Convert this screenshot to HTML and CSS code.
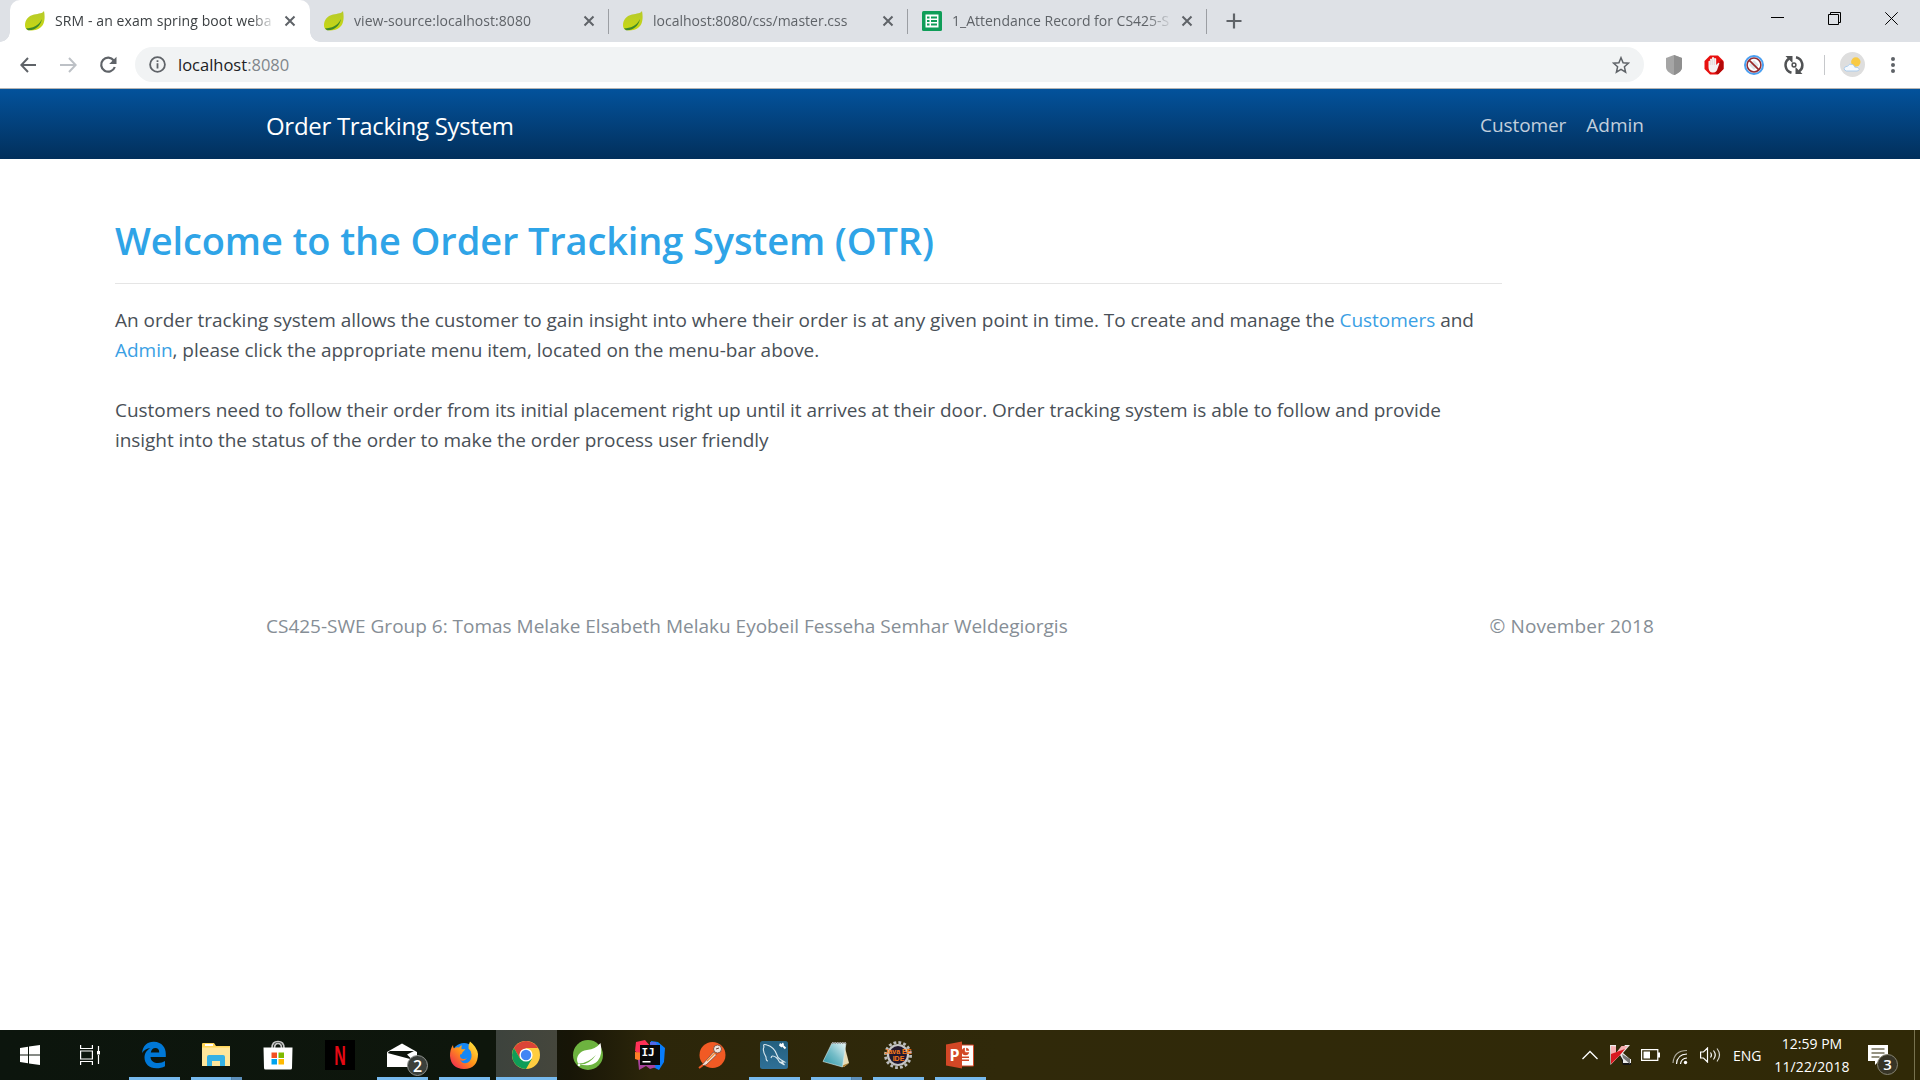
FILE: index.html
```html
<!DOCTYPE html>
<html lang="en">
<head>
<meta charset="utf-8">
<title>SRM - an exam spring boot webapp</title>
<link rel="stylesheet" href="styles.css">
</head>
<body>
<svg class="defs" width="0" height="0">
  <defs>
    <linearGradient id="leafg" x1="0" y1="0" x2="0" y2="1"><stop offset="0" stop-color="#b5c92c"/><stop offset="1" stop-color="#c9d910"/></linearGradient>
    <symbol id="leaf" viewBox="0 0 20 20">
      <path d="M19 0C17.500 2.500 14 2.500 9 3.500C3 5 0 9 0 14C0 16.500 .8 18 2.500 19C9 20.500 16 18.500 18.500 12.500C20 8.500 19.800 3.500 19 0Z" fill="url(#leafg)"/>
      <path d="M1 17.300C7.500 17.300 13.500 15 17 8C15.500 15.800 9 20 3 19.200Z" fill="#3f8a28"/>
    </symbol>
    <symbol id="cross" viewBox="0 0 12 12"><path d="M1.500 1.500L10.500 10.500M10.500 1.500L1.500 10.500" stroke="#5f6368" stroke-width="2" fill="none"/></symbol>
  </defs>
</svg>
<div class="tabstrip">
  <div class="tab active">
    <svg class="fav" width="20" height="20"><use href="#leaf"/></svg>
    <span class="tab-title t1">SRM - an exam spring boot weba</span>
    <svg class="tab-x" width="12" height="12"><use href="#cross"/></svg>
  </div>
  <div class="tab sep">
    <svg class="fav" width="20" height="20"><use href="#leaf"/></svg>
    <span class="tab-title t2">view-source:localhost:8080</span>
    <svg class="tab-x" width="12" height="12"><use href="#cross"/></svg>
  </div>
  <div class="tab sep">
    <svg class="fav" width="20" height="20"><use href="#leaf"/></svg>
    <span class="tab-title t3">localhost:8080/css/master.css</span>
    <svg class="tab-x" width="12" height="12"><use href="#cross"/></svg>
  </div>
  <div class="tab sep">
    <svg class="fav" width="20" height="20" viewBox="0 0 20 20"><rect width="20" height="20" rx="1.500" fill="#0f9d58"/><path d="M3.500 3.500h13v13h-13z" fill="#fff"/><path d="M5 5.500h2.500v2H5zM9 5.500h6v2H9zM5 9h2.500v2H5zM9 9h6v2H9zM5 12.500h2.500v2H5zM9 12.500h6v2H9z" fill="#0f9d58"/></svg>
    <span class="tab-title t4">1_Attendance Record for CS425-S</span>
    <svg class="tab-x" width="12" height="12"><use href="#cross"/></svg>
  </div>
  <svg class="newtab" width="16" height="16" viewBox="0 0 16 16"><path d="M8 .5v15M.5 8h15" stroke="#5f6368" stroke-width="2.200"/></svg>
  <div class="winctl">
    <svg width="13" height="13" viewBox="0 0 13 13"><path d="M0 5.500h13" stroke="#000"/></svg>
    <svg width="13" height="13" viewBox="0 0 13 13" fill="none" stroke="#000"><path d="M.5 2.500h10v10h-10zM2.500 2.500v-2h10v10h-2"/></svg>
    <svg width="13" height="13" viewBox="0 0 13 13"><path d="M.3.3l12.400 12.400M12.700.3L.3 12.700" stroke="#000"/></svg>
  </div>
</div>

<div class="toolbar">
  <svg class="nav-ic" width="17" height="16" viewBox="0 0 17 16" fill="none" stroke="#5f6368" stroke-width="2"><path d="M16 8H1.500M8 1L1.300 8L8 15"/></svg>
  <svg class="nav-ic" width="17" height="16" viewBox="0 0 17 16" fill="none" stroke="#bdc1c6" stroke-width="2"><path d="M0 8h15M9 1l6.700 7L9 15"/></svg>
  <svg class="nav-ic reload" width="18" height="18" viewBox="0 0 18 18"><path d="M14.800 4.500A7 7 0 1 0 15.800 11" fill="none" stroke="#5f6368" stroke-width="2.200"/><path d="M17.500.7V8h-7.300z" fill="#5f6368"/></svg>
  <div class="omnibox">
    <svg width="17" height="17" viewBox="0 0 17 17"><circle cx="8.500" cy="8.500" r="7.400" fill="none" stroke="#5f6368" stroke-width="1.800"/><path d="M7.600 4.200h1.800V6H7.600zM7.600 7.300h1.800v5.300H7.600z" fill="#5f6368"/></svg>
    <span class="url"><b>localhost</b>:8080</span>
    <svg class="star" width="18" height="18" viewBox="0 0 18 18"><path d="M9 1.700l2.100 5 5.300.500-4 3.600 1.200 5.300L9 13.300l-4.600 2.800 1.200-5.300-4-3.600 5.300-.5z" fill="none" stroke="#5f6368" stroke-width="1.500"/></svg>
  </div>
  <div class="exts">
    <svg width="20" height="20" viewBox="0 0 20 20"><path d="M10 0l8 3v9c0 4-4 6.500-8 8c-4-1.500-8-4-8-8V3z" fill="#a5a5a5"/><path d="M10 0l8 3v9c0 4-4 6.500-8 8z" fill="#8f8f8f"/></svg>
    <svg width="20" height="20" viewBox="0 0 20 20"><path d="M6 .5h8l5.500 5.500v8L14 19.500H6L.5 14V6z" fill="#e8100f"/><path d="M13 19l-3-3 7-11 2.500 2v7l-5 5z" fill="#b30808"/><path d="M4.500 10V6.300q.8-1 1.600 0V4q.9-1.200 1.900 0V2.500q1-1.200 2.100 0V3.600q1-1 2.100.1V10l1.900-2q1.300-.6 1.300.6l-1.800 4.800q-1 4-4.200 4H8Q4.500 17 4.500 12z" fill="#f5f1f1"/><path d="M6.200 5v5M8.200 4v6M10.300 4v6" stroke="#cbbcbc" stroke-width=".5"/></svg>
    <svg width="20" height="20" viewBox="0 0 20 20"><circle cx="10" cy="10" r="9" fill="#fff" stroke="#4ba0f1" stroke-width="2"/><circle cx="10" cy="10" r="6.900" fill="#fff" stroke="#8f2c35" stroke-width="1.500"/><path d="M10 5l5 5-5 5-5-5z" fill="#dfe4e8"/><path d="M5.300 5.300l9.400 9.400" stroke="#9b2828" stroke-width="1.700"/></svg>
    <svg width="20" height="20" viewBox="0 0 20 20" fill="none" stroke="#505254" stroke-width="2.500"><path d="M5 3.500A8 8 0 0 0 7.500 17.800M15 16.500A8 8 0 0 0 12 2.200"/><circle cx="10" cy="10" r="1.900" stroke-width="1.500"/><path d="M1.500 1h7v7zM18.500 19h-7v-7z" fill="#505254" stroke="none"/></svg>
    <i class="ext-sep"></i>
    <svg class="avatar" width="25" height="25" viewBox="0 0 25 25"><circle cx="12.500" cy="12.500" r="12.500" fill="#dedede"/><circle cx="15.800" cy="10" r="4.700" fill="#f8ca45"/><path d="M6.500 19q-2.500-.5-2.300-2.600Q5 14 7.500 14.300Q9 11.200 12.300 12.400Q14.500 13 14.800 15.200Q19 15 19.300 17.200Q19 19 17 19z" fill="#f5f9fe" stroke="#a5c9ed" stroke-width=".9"/></svg>
    <svg class="dots" width="6" height="18" viewBox="0 0 6 18" fill="#5f6368"><circle cx="3" cy="3" r="2"/><circle cx="3" cy="9" r="2"/><circle cx="3" cy="15" r="2"/></svg>
  </div>
</div>

<nav class="navbar">
  <a class="brand">Order Tracking System</a>
  <a class="nav-link l1">Customer</a>
  <a class="nav-link l2">Admin</a>
</nav>

<main class="content">
  <h1>Welcome to the Order Tracking System (OTR)</h1>
  <p><span class="ln p1">An order tracking system allows the customer to gain insight into where their order is at any given point in time. To create and manage the <a>Customers</a> and</span>
  <span class="ln p2"><a>Admin</a>, please click the appropriate menu item, located on the menu-bar above.</span></p>
  <p><span class="ln p3">Customers need to follow their order from its initial placement right up until it arrives at their door. Order tracking system is able to follow and provide</span>
  <span class="ln p4">insight into the status of the order to make the order process user friendly</span></p>
</main>

<footer class="footer">
  <span class="f1">CS425-SWE Group 6: Tomas Melake Elsabeth Melaku Eyobeil Fesseha Semhar Weldegiorgis</span>
  <span class="f2">© November 2018</span>
</footer>

<div class="taskbar">
  <div class="sys"><svg width="20" height="20" viewBox="0 0 20 20" fill="#fff"><path d="M0 3l8-1.200v7.700H0zM9 1.600L20 0v9.500H9zM0 10.500h8v7.700L0 17zM9 10.500h11V20L9 18.400z"/></svg></div>
  <div class="sys view"><svg width="21" height="20" viewBox="0 0 21 20" fill="none" stroke="#fff" stroke-width="1.200"><path d="M.6 0v3.500h11.800V0M.6 20v-3.500h11.800V20M.6 6h11.800v8H.6zM18.500 1v5M18.500 10v9"/><path d="M17 6h3v3.500h-3z" fill="#fff" stroke="none"/></svg></div>
  <div class="app run"><svg width="26" height="28" viewBox="0 0 26 28"><path d="M1 12C2 4 7 .5 13 .8C21 1 25 7 24.800 13v3H9.500C9.800 20 13 22 17 22c3 0 5-.8 7-2v5.300c-2.500 1.500-5.500 2-8.500 2C8 27.300 3.500 22.500 3.500 16.500C3.500 12 6 9 9.500 7C6 7.500 3 9 1 12zM9.800 11.500h8.400C18.300 8.500 17 7 14.400 7c-2.600 0-4.200 2-4.600 4.500z" fill="#0078d7"/></svg></div>
  <div class="app run multi"><svg width="28" height="26" viewBox="0 0 28 26"><path d="M0 2Q0 1 1 1h11l2 3h14v20H0z" fill="#ffd557"/><path d="M0 5.500h28V24H0z" fill="#ffe69b"/><path d="M3 2h8v2H3z" fill="#fff"/><path d="M5 24V15q0-2 2-2h14q2 0 2 2v9h-5v-5h-8v5z" fill="#35b1e4"/></svg></div>
  <div class="app"><svg width="30" height="30" viewBox="0 0 30 30"><path d="M9 8q0-6.500 6-6.500T21 8M11.500 8q0-4.500 3.500-4.500T18.500 8" fill="none" stroke="#c8c8c8" stroke-width="1.700"/><path d="M.5 7.500h29l-.5 20.500q0 1.500-1.500 1.500h-25Q1 29.500 1 28z" fill="#fff"/><path d="M8.500 12.500H14V18H8.500z" fill="#f25022"/><path d="M15.500 12.500H21V18h-5.500z" fill="#7fba00"/><path d="M8.500 19H14v5.500H8.500z" fill="#00a4ef"/><path d="M15.500 19H21v5.500h-5.500z" fill="#ffb900"/></svg></div>
  <div class="app"><svg width="30" height="30" viewBox="0 0 30 30"><path d="M0 0h30v30H0z"/><text transform="translate(15 25) scale(.56 1)" text-anchor="middle" font-family="Liberation Sans" font-weight="bold" font-size="28.500" fill="#e50914">N</text></svg></div>
  <div class="app run"><svg class="mail" width="42" height="34" viewBox="0 0 42 34"><path d="M1 10L16 1.500 31 10v15H1z" fill="#fff"/><path d="M4 9h24l-7 3.500 5 5L1.500 11z" fill="#0d140c"/><path d="M2 10l19 2.500" stroke="#fff" stroke-width="0"/><circle cx="31.500" cy="23.500" r="10" fill="#3b403b" stroke="#919491"/><text x="31.500" y="29.500" text-anchor="middle" font-family="Open Sans" font-size="16" font-weight="600" fill="#fff">2</text></svg></div>
  <div class="app run"><svg width="28" height="28" viewBox="0 0 28 28"><defs><linearGradient id="ff" x1="1" y1="0" x2="0" y2="1"><stop offset="0" stop-color="#fff044"/><stop offset=".5" stop-color="#ff9318"/><stop offset="1" stop-color="#ef155d"/></linearGradient></defs><circle cx="14" cy="14" r="12" fill="#1687f5"/><path d="M3 4q0 2 1 3.500Q7 5.500 9 6.500q1-2 3-2.300-1 2-.5 4h4l-3 3q0 2-2.500 2.500Q9.500 17 13 18q2.500.5 4.500-1.500-3.500 5-7.500 2.300Q13 24 18 21.500q4-2.500 3.500-8-.2-4-3-6 0-4.500 1.500-7Q27 6 28 13q0 14.500-14 15Q1 27.500 0 15 0 8 3 4z" fill="url(#ff)"/></svg></div>
  <div class="app run current"><svg width="28" height="28" viewBox="0 0 28 28"><circle cx="14" cy="14" r="14" fill="#ffcd40"/><path d="M1.900 7A14 14 0 0 1 26.100 7H14L8 17.500z" fill="#db4437"/><path d="M1.900 7A14 14 0 0 0 14 28l6-10.500L14 20 8 17.500z" fill="#0f9d58"/><circle cx="14" cy="14" r="6.600" fill="#fff"/><circle cx="14" cy="14" r="5.200" fill="#4285f4"/></svg></div>
  <div class="app"><svg width="30" height="30" viewBox="0 0 30 30"><circle cx="15" cy="15" r="15" fill="#6db33f"/><path d="M27.500 3Q30 14 25 20.500C20.500 26 13 26 6.500 24.500Q16 25 23 15Q14 24 5 23.500C2 17 6.500 11 14 10Q23 9 27.500 3z" fill="#fff"/><circle cx="6" cy="25" r="1.300" fill="#fff"/></svg></div>
  <div class="app"><svg width="30" height="30" viewBox="0 0 30 30"><path d="M1 2l9-2 6 7-6 12L0 11z" fill="#ff3157"/><path d="M0 12l9 1v9l-9-3z" fill="#ff7e27"/><path d="M16 1l7 1 7 6-1 14-5 8-10-5z" fill="#087cfa"/><path d="M3 20l10-3 8 10-6 2-4-3-7 4z" fill="#a8429b"/><path d="M15 2l6 0 3 10-9-4z" fill="#5268e8"/><path d="M5 5h20v20H5z" fill="#080808"/><text x="6.500" y="16" font-family="DejaVu Sans Mono" font-weight="bold" font-size="11" fill="#fff">IJ</text><path d="M7.500 21h8v1.500h-8z" fill="#fff"/></svg></div>
  <div class="app"><svg width="28" height="28" viewBox="0 0 28 28"><circle cx="14.500" cy="14" r="13" fill="#f15a24"/><path d="M3 25L15.500 11l3 3L8 24z" fill="#f5ded2" stroke="#6d4030" stroke-width=".7"/><circle cx="19.500" cy="8" r="4" fill="#eee3dd" stroke="#6d4030" stroke-width=".8"/><path d="M9 20L17 12" stroke="#f58a35" stroke-width="1.500"/><path d="M1 27l4-3" stroke="#f15a24" stroke-width="2"/><path d="M18 8l3-1" stroke="#6d4030"/></svg></div>
  <div class="app run"><svg width="28" height="28" viewBox="0 0 28 28"><defs><linearGradient id="my" x1="0" y1="0" x2="0" y2="1"><stop offset="0" stop-color="#24607f"/><stop offset="1" stop-color="#2f7097"/></linearGradient></defs><rect width="28" height="28" rx="2.500" fill="url(#my)"/><path d="M8 20Q6 20 6 16Q2 9 4 6Q2.500 2.500 7 4Q14 6 16.500 13q1 4 4 5.500l4 2.500-3 0 3 3-5-3q-3-6-7-6-1 0-1.500 2" fill="none" stroke="#dbe9ef" stroke-width="1.100"/><path d="M21.500 3.500l4 4" stroke="#fff" stroke-width="2"/><path d="M19 4.500l1-2.500 1.500 1L23 1.500l1 2-2.500 3z" fill="#fff"/></svg></div>
  <div class="app run multi"><svg width="28" height="28" viewBox="0 0 28 28"><defs><linearGradient id="np" x1="1" y1="0" x2="0" y2="1"><stop offset="0" stop-color="#e9f6f7"/><stop offset=".5" stop-color="#75bdc8"/><stop offset="1" stop-color="#2793a4"/></linearGradient></defs><path d="M22 3l5 19-5 4-3-1z" fill="#e7dcb7"/><path d="M27 22l-5 4-3-1 8-3z" fill="#a97929"/><path d="M10 2h14l-3.500 24L1 20.500z" fill="url(#np)" stroke="#dceced" stroke-width=".6"/><path d="M10 2h15" stroke="#9a9a9a" stroke-width="2" stroke-dasharray="1.500 1"/></svg></div>
  <div class="app run"><svg width="30" height="30" viewBox="0 0 30 30"><circle cx="15" cy="15" r="12.600" fill="none" stroke="#bcbdbd" stroke-width="2.800" stroke-dasharray="2.800 2.150"/><circle cx="15" cy="15" r="10" fill="#21182f" stroke="#c5c5c5" stroke-width="2.200"/><g font-family="Liberation Sans" font-weight="bold" font-size="7" fill="#fc7d18" text-anchor="middle"><text x="15" y="14">Java EE</text><text x="15.500" y="20.500">IDE</text></g></svg></div>
  <div class="app run"><svg width="28" height="28" viewBox="0 0 28 28"><path d="M15 4h12.500v21H15z" fill="#fff" stroke="#d24726"/><path d="M16 15.500h7v1.500h-7zM16 18.500h7V20h-7z" fill="#d24726"/><circle cx="19.500" cy="10.500" r="3.700" fill="#d24726"/><path d="M19.500 10.500V6M19.500 10.500H24" stroke="#fff" stroke-width="1.300"/><path d="M0 3.500L16 .5v27L0 24.500z" fill="#d24726"/><text x="3.500" y="20" font-family="Open Sans" font-weight="bold" font-size="16" fill="#fff">P</text></svg></div>

  <div class="tray">
    <svg width="16" height="10" viewBox="0 0 16 10"><path d="M.5 9L8 1.500 15.500 9" fill="none" stroke="#fff" stroke-width="1.300"/></svg>
    <svg class="kas" width="21" height="21" viewBox="0 0 21 21"><path d="M10 10l11 6v4h-8z" fill="#151515"/><path d="M6 12L15 0h5l-7 8 7 6h1v4h-8v-3l-3-5L.5 20 0 0h6z" fill="#ececec"/><path d="M1 1l5 .5V8l5.500-7H18l-8 8.500L1 19z" fill="#f8b0b3"/><path d="M1 9l14-5-5 6-9 9z" fill="#d91820"/><path d="M12 9l8 5v5l-7-6z" fill="#777"/></svg>
    <svg class="bat" width="19" height="12" viewBox="0 0 19 12"><path d="M.6.600h16.200v10.800H.6z" fill="none" stroke="#fff" stroke-width="1.200"/><path d="M2.500 2.500H9v7H2.500zM17 3.500h2v5h-2z" fill="#fff"/></svg>
    <svg class="wifi" width="16" height="16" viewBox="0 0 16 16" fill="none" stroke="#fff" stroke-width="1.200"><path d="M1 14Q2 1.500 15 1.500" opacity=".6"/><path d="M4.500 15Q5 5.500 15 5M8.500 15Q9 9.500 15 9"/><circle cx="13.500" cy="13.500" r="1.700" fill="#fff" stroke="none"/></svg>
    <svg class="snd" width="21" height="16" viewBox="0 0 21 16" fill="none" stroke="#fff" stroke-width="1.200"><path d="M.6 5H3.500l4-4v14l-4-4H.600zM10.500 5.500q1.800 2.500 0 5M13.500 3.500q3.500 4.500 0 9"/><path d="M17 1.500q5 6.500 0 13" opacity=".8"/></svg>
    <span class="lang">ENG</span>
    <div class="clock"><span class="tm">12:59 PM</span><span class="dt">11/22/2018</span></div>
    <svg class="note" width="32" height="31" viewBox="0 0 32 31"><path d="M1 1h20v16H12l-4 4v-4H1z" fill="#fff"/><path d="M4.500 5h13M4.500 9h13M4.500 13h8" stroke="#2d2707" stroke-width="1.200"/><circle cx="20.500" cy="20.500" r="10" fill="#373426" stroke="#858373"/><text x="20.500" y="26" text-anchor="middle" font-family="Open Sans" font-size="15" font-weight="600" fill="#fff">3</text></svg>
  </div>
</div>
</body>
</html>
```
FILE: styles.css
```css
* { box-sizing: border-box; }
body {
  margin: 0;
  height: 1080px;
  display: flex;
  flex-direction: column;
  overflow: hidden;
  background: #fff;
  font-family: "Open Sans", "Noto Sans", sans-serif;
  color: #495057;
}
svg { display: block; flex: none; }
.defs { position: absolute; }

/* Browser tab strip */
.tabstrip {
  height: 42px;
  flex: none;
  display: flex;
  align-items: flex-start;
  background: #dee1e6;
  padding-left: 10px;
}
.tab {
  width: 299px;
  height: 42px;
  flex: none;
  display: flex;
  align-items: center;
  padding: 0 15px 0 14px;
}
.tab.active {
  width: 300px;
  padding-left: 15px;
  background: #fff;
  border-radius: 10px 10px 0 0;
  position: relative;
}
.tab.active::before, .tab.active::after {
  content: "";
  position: absolute;
  bottom: 0;
  width: 10px;
  height: 10px;
}
.tab.active::before { left: -10px; background: radial-gradient(circle at 0 0, transparent 9.500px, #fff 10px); }
.tab.active::after { right: -10px; background: radial-gradient(circle at 100% 0, transparent 9.500px, #fff 10px); }
.tab.sep { background: linear-gradient(#9b9ea3, #9b9ea3) 298px 9px / 1px 25px no-repeat; }
.tab-title {
  margin-left: 10px;
  width: 220px;
  height: 20px;
  flex: none;
  font-size: 14px;
  line-height: 20px;
  white-space: nowrap;
  color: #5f6368;
  -webkit-mask-image: linear-gradient(90deg, #000 195px, transparent 221px);
}
.active .tab-title { color: #3c4043; }
.t1 { letter-spacing: 0.1px; }
.t2 { letter-spacing: 0.05px; }
.tab-x { margin-left: 9px; }
.newtab { margin: 13px 0 0 19px; }
.winctl { margin-left: auto; display: flex; gap: 44px; padding: 12px 22px 0 0; }

/* Browser toolbar */
.toolbar {
  height: 47px;
  flex: none;
  display: flex;
  align-items: center;
  padding: 0 24px 1px 20px;
  border-bottom: 1px solid #b3b3b3;
}
.nav-ic { margin-right: 23px; }
.reload { margin-left: -1px; margin-right: 18px; }
.omnibox {
  width: 1509px;
  height: 35px;
  border-radius: 18px;
  background: #f1f3f4;
  display: flex;
  align-items: center;
  padding: 0 14px 0 14px;
}
.url { margin-left: 12px; font-size: 16.500px; color: #80868b; }
.url b { font-weight: 400; color: #202124; }
.star { margin-left: auto; }
.exts { display: flex; align-items: center; gap: 20px; margin-left: 20px; }
.ext-sep { width: 1px; height: 20px; background: #c6c8cb; }
.avatar { margin-left: -5px; }
.dots { margin-left: 5px; }

/* Site header */
.navbar {
  height: 70px;
  flex: none;
  display: flex;
  align-items: center;
  padding: 0 276px 0 266px;
  background: linear-gradient(#03529c, #022f5b);
}
.navbar a { white-space: nowrap; }
.brand { font-size: 24px; letter-spacing: -0.3px; color: #fff; margin-right: auto; line-height: 30px; padding-top: 4px; }
.nav-link { font-size: 19px; color: #c2cfdc; line-height: 26px; padding-top: 1px; margin-left: 20px; }
.l1 { letter-spacing: -0.08px; }

/* Page content */
.content { width: 1387px; height: 440px; padding-top: 51px; margin-left: 115px; flex: none; }
h1 {
  margin: 0 0 21px;
  height: 74px;
  padding: 6px 0 0;
  border-bottom: 1px solid #e5e5e5;
  font-size: 38px;
  line-height: 48px;
  font-weight: 600;
  letter-spacing: -0.13px;
  color: #2fa4e7;
  white-space: nowrap;
}
p { margin: 0 0 30px; font-size: 19px; line-height: 30px; }
p a { color: #3aa0e4; }
.ln { display: block; white-space: nowrap; letter-spacing: -0.025px; }
.p4 { letter-spacing: -0.05px; }
.footer {
  height: 54px;
  flex: none;
  display: flex;
  justify-content: space-between;
  align-items: center;
  padding: 0 266px;
  font-size: 19px;
  color: #868e96;
  white-space: nowrap;
}
.f2 { letter-spacing: 0.12px; }

/* Windows taskbar */
.taskbar {
  margin-top: auto;
  height: 50px;
  flex: none;
  display: flex;
  color: #fff;
  background: linear-gradient(90deg, #0c150d 0, #0e160c 490px, #171507 570px, #2c260a 650px, #30290a 1000px, #302907 100%);
}
.sys, .app { height: 50px; display: flex; align-items: center; justify-content: center; flex: none; }
.sys { width: 60px; }
.view { margin-right: 4px; }
.app { width: 61px; margin-right: 1px; padding-right: 1px; }
.run { background: linear-gradient(#76b9ed, #76b9ed) 5px 47px / 51px 3px no-repeat; }
.multi { background: linear-gradient(90deg, #76b9ed 40px, #48769b 40px, #5c8eb9 41px) 5px 47px / 51px 3px no-repeat; }
.current { background: linear-gradient(#76b9ed, #76b9ed) 0 47px / 61px 3px no-repeat, linear-gradient(90deg, #3d433d, #45463c); }
.mail { margin: 8px 0 0 10px; }
.tray {
  margin-left: auto;
  margin-right: 5px;
  width: 333px;
  flex: none;
  display: flex;
  align-items: center;
  border-right: 1px solid #77724f;
}
.kas { margin-left: 12px; }
.bat { margin-left: 10px; }
.wifi { margin: 3px 0 0 12px; }
.snd { margin-left: 12px; }
.lang { width: 28px; margin-left: 12px; font-size: 14px; white-space: nowrap; }
.clock { width: 76px; margin-left: 13px; display: flex; flex-direction: column; align-items: center; font-size: 14px; line-height: 23px; white-space: nowrap; }
.dt { letter-spacing: 0.1px; }
.note { margin: 8px 0 0 17px; }
```
